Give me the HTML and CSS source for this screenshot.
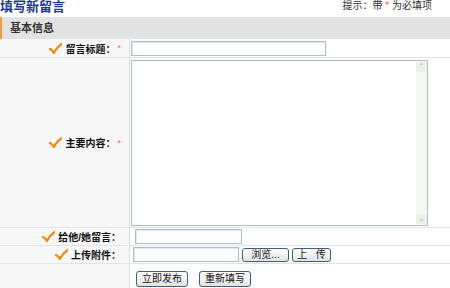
FILE: index.html
```html
<!DOCTYPE html>
<html lang="zh-CN">
<head>
    <meta charset="UTF-8">
    <title>填写新留言</title>
    <link rel="stylesheet" href="styles.css">
</head>
<body>
    <div class="top-bar">
        <h1 class="page-title">填写新留言</h1>
        <span class="hint">提示：带 <span class="req">*</span> 为必填项</span>
    </div>

    <div class="section-head">基本信息</div>

    <form class="msg-form">
        <div class="row row-title">
            <label class="label"><svg class="tick" viewBox="0 0 12 10"><path d="M1 5.5 Q3 6.5 4.5 9 Q7 4 11.5 1" /></svg>留言标题：<span class="req">*</span></label>
            <div class="field"><input type="text" class="txt txt-title"></div>
        </div>
        <div class="row row-body">
            <label class="label"><svg class="tick" viewBox="0 0 12 10"><path d="M1 5.5 Q3 6.5 4.5 9 Q7 4 11.5 1" /></svg>主要内容：<span class="req">*</span></label>
            <div class="field">
                <div class="area">
                    <textarea class="area-text"></textarea>
                    <div class="scroll">
                        <span class="arrow">&#8963;</span>
                        <span class="arrow">&#8964;</span>
                    </div>
                </div>
            </div>
        </div>
        <div class="row row-small">
            <label class="label"><svg class="tick" viewBox="0 0 12 10"><path d="M1 5.5 Q3 6.5 4.5 9 Q7 4 11.5 1" /></svg>给他/她留言：</label>
            <div class="field pad5"><input type="text" class="txt txt-to"></div>
        </div>
        <div class="row row-small">
            <label class="label"><svg class="tick" viewBox="0 0 12 10"><path d="M1 5.5 Q3 6.5 4.5 9 Q7 4 11.5 1" /></svg>上传附件：</label>
            <div class="field pad3">
                <input type="text" class="txt txt-file">
                <button type="button" class="btn btn-browse">浏览...</button>
                <button type="button" class="btn btn-up">上&nbsp;&nbsp;&nbsp;传</button>
            </div>
        </div>
        <div class="row row-actions">
            <div class="label"></div>
            <div class="field actions">
                <button type="submit" class="btn btn-big">立即发布</button>
                <button type="reset" class="btn btn-big">重新填写</button>
            </div>
        </div>
    </form>
</body>
</html>
```

FILE: styles.css
```css
body {
    margin: 0;
    padding: 0;
    font-family: 'Liberation Sans', 'Noto Sans CJK SC', sans-serif;
    font-size: 11px;
    color: #222;
    background-color: #fff;
    width: 450px;
    height: 288px;
    overflow: hidden;
}

.top-bar {
    display: flex;
    justify-content: space-between;
    align-items: flex-start;
    height: 17px;
}

.page-title {
    margin: 0;
    font-size: 13px;
    line-height: 13px;
    color: #1c3a8e;
    font-weight: bold;
}

.hint {
    font-size: 10px;
    line-height: 12px;
    margin-right: 18px;
    color: #333;
}

.hint .req {
    font-size: 10px;
}

.req {
    color: #f55;
    font-size: 9px;
}

.section-head {
    height: 22px;
    line-height: 22px;
    background-color: #e2e2e2;
    border-left: 2px solid #f39a3c;
    padding-left: 8px;
    font-weight: bold;
    color: #333;
}

.row {
    display: grid;
    grid-template-columns: 130px 1fr;
    border-bottom: 1px solid #e3e3e3;
}

.label {
    display: flex;
    align-items: center;
    justify-content: flex-end;
    background-color: #f7f7f7;
    border-right: 1px solid #dcdcdc;
    font-weight: bold;
    font-size: 10px;
    padding-right: 8px;
    color: #111;
}

.label .req {
    margin-left: 2px;
    font-weight: normal;
}

.tick {
    width: 13px;
    height: 11px;
    margin-right: 3px;
    fill: none;
    stroke: #f28a10;
    stroke-width: 2.2;
    stroke-linecap: round;
}

.field {
    display: flex;
    align-items: center;
    gap: 3px;
    padding-left: 1px;
}

.pad5 {
    padding-left: 5px;
}

.pad3 {
    padding-left: 3px;
}

.row-title {
    height: 18px;
}

.row-body {
    height: 169px;
}

.row-small {
    height: 17px;
}

.row-actions {
    height: 26px;
    border-bottom: none;
}

.txt {
    box-sizing: border-box;
    height: 15px;
    border: 1px solid #a7bcd6;
    box-shadow: inset 1px 1px 0 #dfe7f1;
    padding: 0 2px;
    font-size: 11px;
    outline: none;
}

.txt-title {
    width: 195px;
}

.txt-to {
    width: 107px;
}

.txt-file {
    width: 106px;
}

.area {
    box-sizing: border-box;
    display: flex;
    width: 297px;
    height: 166px;
    border: 1px solid #a7bcd6;
    background-color: #fff;
}

.area-text {
    flex-grow: 1;
    border: none;
    resize: none;
    outline: none;
    padding: 2px;
    font-size: 11px;
}

.scroll {
    width: 11px;
    background-color: #f8f8f3;
    display: flex;
    flex-direction: column;
    justify-content: space-between;
    padding: 1px 0;
}

.arrow {
    display: block;
    height: 10px;
    line-height: 10px;
    text-align: center;
    font-size: 8px;
    color: #b5b5b0;
    background-color: #efefe9;
}

.btn {
    box-sizing: border-box;
    height: 14px;
    padding: 0;
    border: 1px solid #3e5e80;
    border-radius: 3px;
    background: linear-gradient(#ffffff, #e4e4de);
    font-family: 'Liberation Sans', 'Noto Sans CJK SC', sans-serif;
    font-size: 10px;
    line-height: 12px;
    color: #111;
    white-space: nowrap;
}

.btn-browse {
    width: 47px;
}

.btn-up {
    width: 39px;
}

.actions {
    padding-left: 6px;
    gap: 11px;
    align-items: flex-start;
    padding-top: 7px;
}

.btn-big {
    width: 52px;
    height: 16px;
    font-size: 10px;
    line-height: 14px;
}
```
